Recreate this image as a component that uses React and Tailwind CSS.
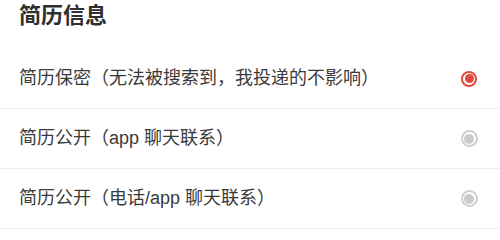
import React, { useState } from 'react'

const options = [
  '简历保密（无法被搜索到，我投递的不影响）',
  '简历公开（app 聊天联系）',
  '简历公开（电话/app 聊天联系）',
]

function Radio({ checked }) {
  if (checked) {
    return (
      <span className="flex h-[16px] w-[16px] items-center justify-center rounded-full border-2 border-[#e2493e]">
        <span className="h-[9px] w-[9px] rounded-full bg-[#e2493e]" />
      </span>
    )
  }
  return (
    <span className="flex h-[17px] w-[17px] items-center justify-center rounded-full border-2 border-[#cfcfcf]">
      <span className="h-[10px] w-[10px] rounded-full bg-[#cbcbcb]" />
    </span>
  )
}

export default function App() {
  const [selected, setSelected] = useState(0)

  return (
    <div
      className="min-h-screen bg-white text-[#333]"
      style={{ fontFamily: '"Liberation Sans", "Noto Sans CJK SC", sans-serif' }}
    >
      {/* Title */}
      <div className="h-[49px] pl-[19px]">
        <h2 className="text-[22px] font-bold leading-[32px] text-[#2f2f2f]">简历信息</h2>
      </div>

      {/* Options */}
      {options.map((label, i) => (
        <div
          key={i}
          onClick={() => setSelected(i)}
          className="flex h-[60px] cursor-pointer items-center justify-between border-b border-[#eeeeee] pl-[19px] pr-[22px]"
        >
          <span className="text-[18px] text-[#3a3a3a]">{label}</span>
          <span className="flex w-[18px] justify-center">
            <Radio checked={selected === i} />
          </span>
        </div>
      ))}
    </div>
  )
}
